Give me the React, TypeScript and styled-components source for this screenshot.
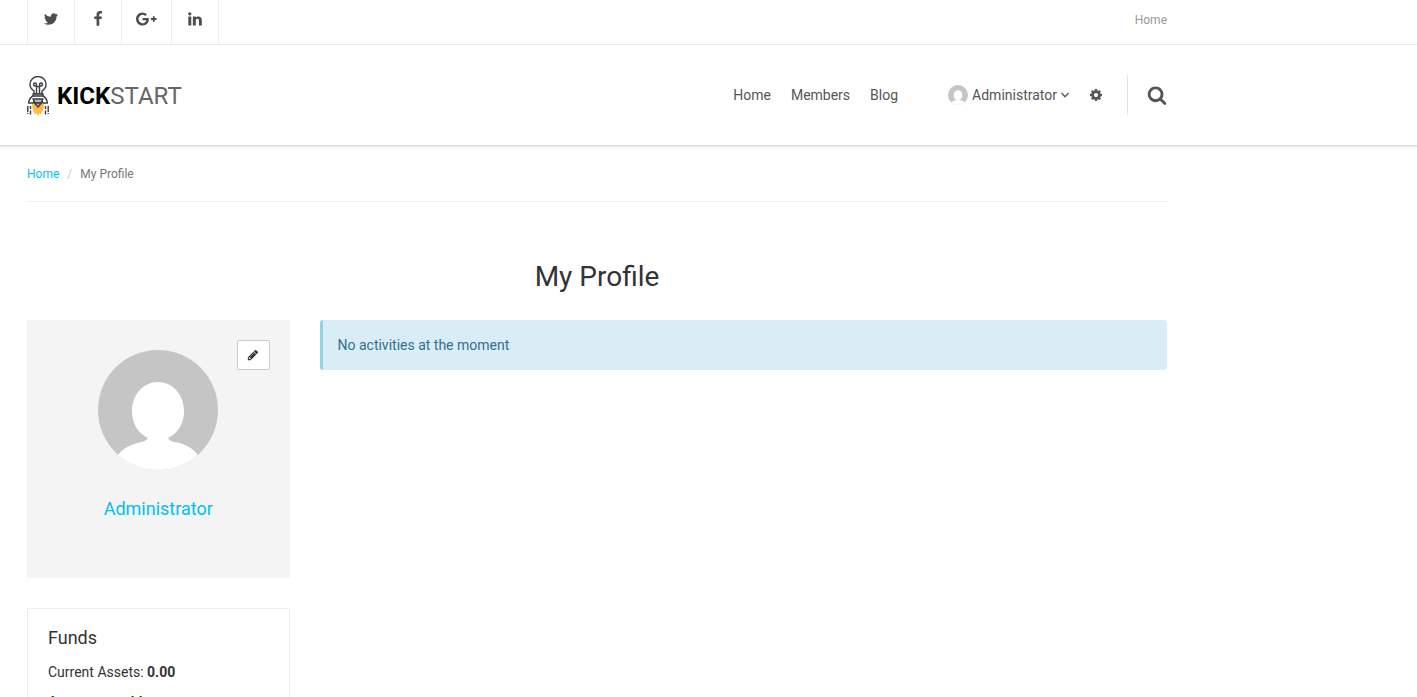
import React from "react";
import styled, { createGlobalStyle } from "styled-components";

const GlobalStyle = createGlobalStyle`
  *, *::before, *::after { box-sizing: border-box; }
  html, body, #root { height: 100%; }
  body {
    margin: 0;
    overflow: hidden;
    background: #fff;
    color: #333;
    font-family: Roboto, "Liberation Sans", sans-serif;
    font-size: 14px;
    line-height: 20px;
  }
  a { text-decoration: none; color: #00bff3; }
  h1, h2, h3, p, ol, ul { margin: 0; padding: 0; font-weight: 400; }
  ol, ul { list-style: none; }
`;

const ICONS = {
  twitter: { width: 1792, d: "M1684 408q-67 98-162 167 1 14 1 42 0 130-38 259.5t-115.5 248.5-184.5 210.5-258 146-323 54.5q-271 0-496-145 35 4 78 4 225 0 401-138-105-2-188-64.5t-114-159.5q33 5 61 5 43 0 85-11-112-23-185.5-111.5t-73.5-205.5v-4q68 38 146 41-66-44-105-115t-39-154q0-88 44-163 121 149 294.5 238.5t371.5 99.5q-8-38-8-74 0-134 94.5-228.5t228.5-94.5q140 0 236 102 109-21 205-78-37 115-142 178 93-10 186-50z" },
  facebook: { width: 1792, d: "M1343 12v264h-157q-86 0-116 36t-30 108v189h293l-39 296h-254v759h-306v-759h-255v-296h255v-218q0-186 104-288.5t277-102.5q147 0 228 12z" },
  google: { width: 2304, d: "M1437 913q0 208-87 370.5t-248 254-369 91.5q-149 0-285-58t-234-156-156-234-58-285 58-285 156-234 234-156 285-58q286 0 491 192l-199 191q-117-113-292-113-123 0-227.5 62t-165.5 168.5-61 232.5 61 232.5 165.5 168.5 227.5 62q83 0 152.5-23t114.5-57.5 78.5-78.5 49-83 21.5-74h-416v-252h692q12 63 12 122zm867-122v210h-209v209h-210v-209h-209v-210h209v-209h210v209h209z" },
  linkedin: { width: 1792, d: "M477 625v991h-330v-991h330zm21-306q1 73-50.5 122t-135.5 49h-2q-82 0-132-49t-50-122q0-74 51.5-122.5t134.5-48.5 133 48.5 51 122.5zm1166 729v568h-329v-530q0-105-40.5-164.5t-126.5-59.5q-63 0-105.5 34.5t-63.5 85.5q-11 30-11 81v553h-329q2-399 2-647t-1-296l-1-48h329v144h-2q20-32 41-56t56.5-52 87-43.5 114.5-15.5q171 0 275 113.5t104 332.5z" },
  search: { width: 1792, d: "M1216 832q0-185-131.5-316.5t-316.5-131.5-316.5 131.5-131.5 316.5 131.5 316.5 316.5 131.5 316.5-131.5 131.5-316.5zm512 832q0 52-38 90t-90 38q-54 0-90-38l-343-342q-179 124-399 124-143 0-273.5-55.5t-225-150-150-225-55.5-273.5 55.5-273.5 150-225 225-150 273.5-55.5 273.5 55.5 225 150 150 225 55.5 273.5q0 220-124 399l343 343q37 37 37 90z" },
  cog: { width: 1792, d: "M1152 896q0-106-75-181t-181-75-181 75-75 181 75 181 181 75 181-75 75-181zm512-109v222q0 12-8 23t-20 13l-185 28q-19 54-39 91 35 50 107 138 10 12 10 25t-9 23q-27 37-99 108t-94 71q-12 0-26-9l-138-108q-44 23-91 38-16 136-29 186-7 28-36 28h-222q-14 0-24.5-8.5t-11.5-21.5l-28-184q-49-16-90-37l-141 107q-10 9-25 9-14 0-25-11-126-114-165-168-7-10-7-23 0-12 8-23 15-21 51-66.5t54-70.5q-27-50-41-99l-183-27q-13-2-21-12.5t-8-23.5v-222q0-12 8-23t19-13l186-28q14-46 39-92-40-57-107-138-10-12-10-24 0-10 9-23 26-36 98.5-107.5t94.5-71.5q13 0 26 10l138 107q44-23 91-38 16-136 29-186 7-28 36-28h222q14 0 24.5 8.5t11.5 21.5l28 184q49 16 90 37l142-107q9-9 24-9 13 0 25 10 129 119 165 170 7 8 7 22 0 12-8 23-15 21-51 66.5t-54 70.5q26 50 41 98l183 28q13 2 21 12.5t8 23.5z" },
  pencil: { width: 1792, d: "M491 1536l91-91-235-235-91 91v107h128v128h107zm523-928q0-22-22-22-10 0-17 7l-542 542q-7 7-7 17 0 22 22 22 10 0 17-7l542-542q7-7 7-17zm-54-192l416 416-832 832h-416v-416zm683 96q0 53-37 90l-166 166-416-416 166-165q36-38 90-38 53 0 91 38l235 234q37 39 37 91z" },
};

const Glyph = styled.svg<{ $size: number }>`
  display: block;
  flex: none;
  height: ${(p) => p.$size}px;
  fill: currentColor;
`;

function Icon({ name, size }: { name: keyof typeof ICONS; size: number }) {
  const icon = ICONS[name];
  return (
    <Glyph $size={size} viewBox={`0 0 ${icon.width} 1792`} aria-hidden="true">
      <path d={icon.d} />
    </Glyph>
  );
}

const Page = styled.div`
  height: 100%;
  overflow: hidden;
`;

const Container = styled.div`
  max-width: 1194px;
  padding: 0 27px;
`;

const TopBar = styled.div`
  border-bottom: 1px solid #eee;
`;

const TopBarInner = styled(Container)`
  display: flex;
  justify-content: space-between;
  height: 44px;
`;

const SocialList = styled.ul`
  display: flex;
  border-left: 1px solid #eee;
`;

const SocialLink = styled.a<{ $wide?: boolean }>`
  display: flex;
  justify-content: center;
  width: ${(p) => (p.$wide ? 50 : 47)}px;
  height: 44px;
  padding-top: 11px;
  border-right: 1px solid #eee;
  color: #4d4d4d;
`;

const TopLink = styled.a`
  padding-top: 10px;
  color: #999;
  font-size: 12px;
`;

const Header = styled.header`
  border-bottom: 1px solid #ddd;
  box-shadow: 0 1px 3px rgba(0, 0, 0, 0.12);
`;

const HeaderInner = styled(Container)`
  display: flex;
  align-items: center;
  justify-content: space-between;
  height: 100px;
`;

const Brand = styled.a`
  display: flex;
  align-items: center;
  gap: 8px;
  padding-top: 2px;
  color: #666;
  font-size: 24px;
  line-height: 40px;

  b { color: #000; font-weight: 700; }
`;

const Nav = styled.nav`
  display: flex;
  align-items: center;
  gap: 20px;
`;

const NavLink = styled.a`
  color: #555;
`;

const UserButton = styled.button`
  display: flex;
  align-items: center;
  gap: 4px;
  margin-left: 30px;
  padding: 0;
  border: 0;
  background: none;
  color: #555;
  font: inherit;
`;

const IconButton = styled.button`
  display: flex;
  padding: 0;
  border: 0;
  background: none;
  color: #555;
`;

const SearchArea = styled.div`
  display: flex;
  align-items: center;
  height: 40px;
  margin-left: 4px;
  padding-left: 19px;
  border-left: 1px solid #e5e5e5;
`;

const Breadcrumb = styled.ol`
  display: flex;
  gap: 8px;
  padding: 18px 0 17px;
  border-bottom: 1px solid #eee;
  color: #777;
  font-size: 12px;
`;

const Slash = styled.li`
  color: #ccc;
`;

const Title = styled.h1`
  margin: 59px 0 27px;
  color: #333;
  font-size: 28px;
  line-height: 32px;
  text-align: center;
`;

const Columns = styled.div`
  display: grid;
  grid-template-columns: repeat(12, minmax(0, 1fr));
  gap: 30px;
  align-items: start;
`;

const Sidebar = styled.aside`
  display: grid;
  grid-column: span 3;
  gap: 30px;
`;

const ProfileCard = styled.section`
  position: relative;
  display: flex;
  flex-direction: column;
  align-items: center;
  padding: 30px 20px 57px;
  background: #f4f4f4;
`;

const EditButton = styled.button`
  position: absolute;
  top: 20px;
  right: 20px;
  display: flex;
  align-items: center;
  justify-content: center;
  width: 33px;
  height: 30px;
  padding: 0;
  border: 1px solid #ccc;
  border-radius: 2px;
  background: #fff;
  color: #333;
`;

const ProfileName = styled.a`
  margin-top: 27px;
  font-size: 18px;
  line-height: 24px;
`;

const FundsCard = styled.section`
  padding: 16px 20px;
  border: 1px solid #eee;
`;

const FundsTitle = styled.h2`
  margin-bottom: 11px;
  font-size: 18px;
  line-height: 26px;
`;

const FundsLine = styled.p`
  margin-bottom: 10px;
`;

const Notice = styled.p`
  grid-column: span 9;
  && { padding: 15px; }
  border-left: 3px solid #98cfea;
  border-radius: 3px;
  background: #d9edf7;
  color: #31708f;
`;

function Avatar({ size }: { size: number }) {
  return (
    <Glyph $size={size} viewBox="0 0 120 120" role="img" aria-label="Administrator avatar">
      <clipPath id={`avatar-${size}`}>
        <circle cx="60" cy="60" r="60" />
      </clipPath>
      <g clipPath={`url(#avatar-${size})`}>
        <rect width="120" height="120" fill="#c5c5c5" />
        <path
          fill="#fff"
          d="M60 32C74 32 86 44 86 61C86 74 80 83 70 88C72 92 77 92 82 93C91 96 97 100 101 107V120H19V107C23 100 29 96 39 93C43 92 48 92 50 88C40 83 34 74 34 61C34 44 46 32 60 32Z"
        />
      </g>
    </Glyph>
  );
}

function RocketLogo() {
  return (
    <Glyph $size={40} viewBox="0 0 22 40" aria-hidden="true">
      <path fill="#fdbb45" d="M5.500 26h11c1 6-1 10-3 12.500l-1-1.500-1.500 3-1.500-3-1 1.500C6.500 36 4.500 32 5.500 26Z" />
      <g fill="none" stroke="#3c3d42" strokeWidth="1.4" strokeLinejoin="round">
        <path fill="#fff" d="M7 18v-3C4 13 3 11 3 8.500a8 8 0 0 1 16 0c0 2.500-1 4.500-4 6.500v3Z" />
        <path d="M9.500 17V9.500M12.500 17V9.500M9.500 10.500h3" />
        <circle cx="8" cy="8.500" r="1.500" />
        <circle cx="14" cy="8.500" r="1.500" />
        <path fill="#ddd" d="M6 18h10v3H6Z" />
        <path fill="#fff" d="M6 20c-2 1-4 4-4.500 7H6l1-2h8l1 2h4.500C20 24 18 21 16 20Z" />
        <path fill="#bbb" d="M6 23h10l-2 4H8Z" />
        <path fill="#eda83b" d="m7.500 27 3.500 4 3.500-4Z" />
      </g>
      <path stroke="#3c3d42" strokeWidth="1.400" d="M.8 30v6M3.500 30v3M3.500 34.500v4M18.500 30v3M18.500 34.500v4M21.200 30v6M.8 37v1M21.200 37v1" />
    </Glyph>
  );
}

const Chevron = styled.svg`
  width: 8px;
  height: 6px;
  fill: none;
  stroke: currentColor;
  stroke-width: 1.3;
`;

export default function App() {
  return (
    <Page>
      <GlobalStyle />
      <TopBar>
        <TopBarInner>
          <SocialList>
            <li><SocialLink href="#twitter" aria-label="Twitter"><Icon name="twitter" size={16} /></SocialLink></li>
            <li><SocialLink href="#facebook" aria-label="Facebook"><Icon name="facebook" size={16} /></SocialLink></li>
            <li><SocialLink href="#google" aria-label="Google Plus" $wide><Icon name="google" size={16} /></SocialLink></li>
            <li><SocialLink href="#linkedin" aria-label="LinkedIn"><Icon name="linkedin" size={16} /></SocialLink></li>
          </SocialList>
          <TopLink href="#home">Home</TopLink>
        </TopBarInner>
      </TopBar>
      <Header>
        <HeaderInner>
          <Brand href="#home">
            <RocketLogo />
            <span><b>KICK</b>START</span>
          </Brand>
          <Nav>
            <NavLink href="#home">Home</NavLink>
            <NavLink href="#members">Members</NavLink>
            <NavLink href="#blog">Blog</NavLink>
            <UserButton type="button">
              <Avatar size={20} />
              Administrator
              <Chevron viewBox="0 0 8 6" aria-hidden="true"><path d="m.4 1 3.600 3.800L7.600 1" /></Chevron>
            </UserButton>
            <IconButton type="button" aria-label="Settings"><Icon name="cog" size={14} /></IconButton>
            <SearchArea>
              <IconButton type="button" aria-label="Search"><Icon name="search" size={20} /></IconButton>
            </SearchArea>
          </Nav>
        </HeaderInner>
      </Header>
      <Container as="main">
        <Breadcrumb>
          <li><a href="#home">Home</a></li>
          <Slash>/</Slash>
          <li>My Profile</li>
        </Breadcrumb>
        <Title>My Profile</Title>
        <Columns>
          <Sidebar>
            <ProfileCard>
              <EditButton type="button" aria-label="Edit profile"><Icon name="pencil" size={12} /></EditButton>
              <Avatar size={120} />
              <ProfileName href="#profile">Administrator</ProfileName>
            </ProfileCard>
            <FundsCard>
              <FundsTitle>Funds</FundsTitle>
              <FundsLine>Current Assets: <b>0.00</b></FundsLine>
              <FundsLine><b>Amount payable</b></FundsLine>
            </FundsCard>
          </Sidebar>
          <Notice>No activities at the moment</Notice>
        </Columns>
      </Container>
    </Page>
  );
}
